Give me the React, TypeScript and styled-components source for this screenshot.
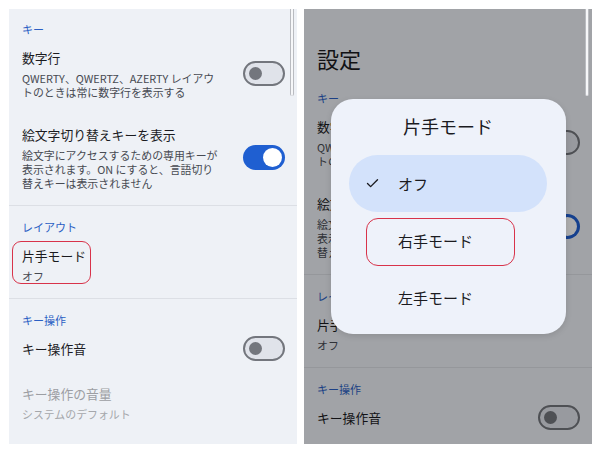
import React from "react";
import styled, { createGlobalStyle, css } from "styled-components";
import { Check } from "lucide-react";

const Global = createGlobalStyle`
  html, body { margin: 0; padding: 0; background: #ffffff; }
  body { font-family: "Noto Sans CJK JP", "Noto Sans", "Roboto", sans-serif; }
  * { box-sizing: border-box; }
`;

const Page = styled.div`
  display: flex;
  gap: 7px;
  padding: 9px 0 0 9px;
  width: 600px;
  height: 451px;
`;

const Screen = styled.div`
  position: relative;
  flex: none;
  width: 288px;
  height: 435px;
  overflow: hidden;
  background: #eef1f6;
`;

const ScrollThumb = styled.div<{ $top?: boolean }>`
  position: absolute;
  top: 0;
  right: 3px;
  width: 4px;
  height: 87px;
  border-radius: 0 0 2px 2px;
  background: #f6f7f9;
  border-left: 1px solid #b9bbc0;
  border-right: 1px solid #b9bbc0;
  z-index: ${(p) => (p.$top ? 5 : 1)};
`;

const PageTitle = styled.h1`
  margin: 0;
  height: 69px;
  padding: 34px 13px 0;
  font-size: 22px;
  line-height: 30px;
  font-weight: 400;
  color: #1b1b1f;
`;

const SectionHeader = styled.div<{ $first?: boolean }>`
  padding: ${(p) => (p.$first ? "12px" : "13px")} 13px 0;
  font-size: 11px;
  line-height: 16px;
  color: #2b5fc4;
`;

const Row = styled.div`
  display: flex;
  align-items: center;
  padding: 12px 12px 15px 13px;
  gap: 12px;
`;

const RowText = styled.div<{ $marked?: boolean }>`
  position: relative;
  flex: 1;
  min-width: 0;
  ${(p) =>
    p.$marked &&
    css`
      flex: none;
      &::after {
        content: "";
        position: absolute;
        left: -10px;
        right: -5px;
        top: -6px;
        bottom: -1px;
        border: 1.5px solid #d8334a;
        border-radius: 9px;
      }
    `}
`;

const RowTitle = styled.div<{ $disabled?: boolean }>`
  font-size: 12.8px;
  line-height: 18px;
  color: ${(p) => (p.$disabled ? "#9c9ea3" : "#1b1b1f")};
  white-space: nowrap;
`;

const RowDesc = styled.div<{ $disabled?: boolean }>`
  margin-top: 4px;
  font-size: 10.9px;
  line-height: 14px;
  color: ${(p) => (p.$disabled ? "#a5a7ab" : "#474a52")};
  white-space: nowrap;
`;

const Divider = styled.div`
  height: 1px;
  background: #dcdfe5;
`;

const Toggle = styled.div<{ $on?: boolean }>`
  flex: none;
  margin: -4px 0 -3px auto;
  width: 42px;
  height: 25px;
  border-radius: 13px;
  display: flex;
  align-items: center;
  ${(p) =>
    p.$on
      ? css`
          background: #1f5fd1;
          justify-content: flex-end;
          padding-right: 3px;
        `
      : css`
          background: #e0e3ea;
          border: 2px solid #73767d;
          justify-content: flex-start;
          padding-left: 4px;
        `}
`;

const Knob = styled.div<{ $on?: boolean }>`
  border-radius: 50%;
  width: ${(p) => (p.$on ? "19px" : "13px")};
  height: ${(p) => (p.$on ? "19px" : "13px")};
  background: ${(p) => (p.$on ? "#ffffff" : "#73767d")};
`;

const Overlay = styled.div`
  position: absolute;
  inset: 0;
  background: rgba(0, 0, 0, 0.32);
  z-index: 2;
`;

const Dialog = styled.div`
  position: absolute;
  top: 90px;
  left: 27px;
  width: 235px;
  height: 235px;
  border-radius: 22px;
  background: #eef2fa;
  box-shadow: 0 2px 6px rgba(0, 0, 0, 0.12);
  z-index: 3;
  padding: 16px 19px 8px 18px;
`;

const DialogTitle = styled.div`
  text-align: center;
  font-size: 18px;
  line-height: 22px;
  color: #1b1b1f;
  margin-bottom: 18px;
`;

const OptionList = styled.div`
  display: flex;
  flex-direction: column;
`;

const Option = styled.div<{ $selected?: boolean; $marked?: boolean }>`
  position: relative;
  height: 57px;
  display: flex;
  align-items: center;
  padding-left: 16px;
  gap: 18px;
  border-radius: 29px;
  font-size: 15px;
  color: #1b1b1f;
  background: ${(p) => (p.$selected ? "#d3e2fb" : "transparent")};
  ${(p) =>
    p.$marked &&
    css`
      &::after {
        content: "";
        position: absolute;
        left: 17px;
        width: 147px;
        top: 6px;
        bottom: 3px;
        border: 1.5px solid #d8334a;
        border-radius: 12px;
      }
    `}
`;

const CheckSlot = styled.span`
  width: 15px;
  display: flex;
  align-items: center;
  justify-content: center;
  color: #1b1b1f;
`;

function SettingsList({ marked, full }: { marked?: boolean; full?: boolean }) {
  return (
    <div>
      <SectionHeader $first>キー</SectionHeader>
      <Row>
        <RowText>
          <RowTitle>数字行</RowTitle>
          <RowDesc>
            QWERTY、QWERTZ、AZERTY レイアウ
            <br />
            トのときは常に数字行を表示する
          </RowDesc>
        </RowText>
        <Toggle>
          <Knob />
        </Toggle>
      </Row>
      <Row>
        <RowText>
          <RowTitle>絵文字切り替えキーを表示</RowTitle>
          <RowDesc>
            絵文字にアクセスするための専用キーが
            <br />
            表示されます。ON にすると、言語切り
            <br />
            替えキーは表示されません
          </RowDesc>
        </RowText>
        <Toggle $on>
          <Knob $on />
        </Toggle>
      </Row>
      <Divider />
      <SectionHeader>レイアウト</SectionHeader>
      <Row>
        <RowText $marked={marked}>
          <RowTitle>片手モード</RowTitle>
          <RowDesc>オフ</RowDesc>
        </RowText>
      </Row>
      <Divider />
      <SectionHeader>キー操作</SectionHeader>
      <Row>
        <RowText>
          <RowTitle>キー操作音</RowTitle>
        </RowText>
        <Toggle>
          <Knob />
        </Toggle>
      </Row>
      {full && (
        <Row>
          <RowText>
            <RowTitle $disabled>キー操作の音量</RowTitle>
            <RowDesc $disabled>システムのデフォルト</RowDesc>
          </RowText>
        </Row>
      )}
    </div>
  );
}

export default function App() {
  return (
    <>
      <Global />
      <Page>
        <Screen>
          <ScrollThumb />
          <SettingsList marked full />
        </Screen>
        <Screen>
          <ScrollThumb $top />
          <PageTitle>設定</PageTitle>
          <SettingsList />
          <Overlay />
          <Dialog>
            <DialogTitle>片手モード</DialogTitle>
            <OptionList>
              <Option $selected>
                <CheckSlot>
                  <Check size={15} strokeWidth={2.2} />
                </CheckSlot>
                オフ
              </Option>
              <Option $marked>
                <CheckSlot />
                右手モード
              </Option>
              <Option>
                <CheckSlot />
                左手モード
              </Option>
            </OptionList>
          </Dialog>
        </Screen>
      </Page>
    </>
  );
}
